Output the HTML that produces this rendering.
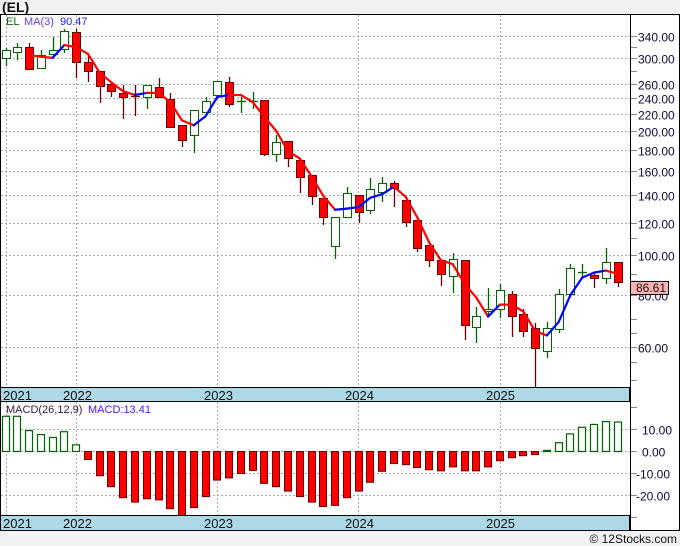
<!DOCTYPE html>
<html><head><meta charset="utf-8"><style>
html,body{margin:0;padding:0;background:#f2f2f2;}
svg{display:block;font-family:"Liberation Sans",Tahoma,sans-serif;}
</style></head><body>
<svg id="s" width="680" height="546" xmlns="http://www.w3.org/2000/svg">
<rect x="0" y="0" width="680" height="546" fill="#f2f2f2"/>
<rect x="0.5" y="14.5" width="679" height="516" fill="#fff" stroke="#000"/>
<g id="grid"></g>
<g id="cand"></g>
<g id="ma"></g>
<g id="macd"></g>
<rect x="0.5" y="387.5" width="629" height="14" fill="#add8e6" stroke="#000"/>
<rect x="0.5" y="515.5" width="629" height="15" fill="#add8e6" stroke="#000"/>
<line x1="630.5" y1="14" x2="630.5" y2="531" stroke="#000"/>
<g font-size="13" fill="#111">
<text x="3" y="400">2021</text><text x="63" y="400">2022</text><text x="204" y="400">2023</text><text x="345" y="400">2024</text><text x="486" y="400">2025</text>
<text x="3" y="528">2021</text><text x="63" y="528">2022</text><text x="204" y="528">2023</text><text x="345" y="528">2024</text><text x="486" y="528">2025</text>
</g>
<text x="2" y="12" font-size="14" font-weight="bold" fill="#111">(EL)</text>
<g font-size="11"><text x="6" y="25" fill="#006400">EL</text><text x="24" y="25" fill="#6a3cf0">MA(3)</text><text x="60" y="25" fill="#2020ff">90.47</text></g>
<g font-size="11"><text x="6" y="413" fill="#3a1a3a">MACD(26,12,9)</text><text x="88" y="413" fill="#4a1aff">MACD:13.41</text></g>
<text x="677" y="543" font-size="12" fill="#111" text-anchor="end">© 12Stocks.com</text>
<g id="ax" font-size="12" fill="#0a0a3a"></g>
<rect x="630.5" y="281.5" width="38" height="13" fill="#ffb4b4" stroke="#000"/>
<text x="636" y="292" font-size="12" fill="#111">86.61</text>
</svg>
<script>
var NS="http://www.w3.org/2000/svg";
function el(p,t,a,txt){var e=document.createElementNS(NS,t);for(var k in a)e.setAttribute(k,a[k]);if(txt!==undefined)e.textContent=txt;document.getElementById(p).appendChild(e);return e;}
function Y(p){return 1080.6-179.2*Math.log(p);}
function P(y){return Math.exp((1080.6-y)/179.2);}
// grid
[340,300,260,240,220,200,180,160,140,120,100,80,60].forEach(function(p){var y=Math.round(Y(p))+0.5;
el("grid","line",{x1:1,x2:630,y1:y,y2:y,stroke:"#aaa","stroke-dasharray":"2,2"});
el("grid","line",{x1:630,x2:637,y1:y,y2:y,stroke:"#888"});
el("ax","text",{x:638,y:y+5},p.toFixed(2));});
[320,280,110,90,70,65,55,50].forEach(function(p){var y=Math.round(Y(p))+0.5;el("grid","line",{x1:630,x2:637,y1:y,y2:y,stroke:"#888"});});
[6,76,217,358,500].forEach(function(x){el("grid","line",{x1:x+0.5,x2:x+0.5,y1:15,y2:387,stroke:"#aaa","stroke-dasharray":"2,2"});el("grid","line",{x1:x+0.5,x2:x+0.5,y1:402,y2:515,stroke:"#aaa","stroke-dasharray":"2,2"});});
var mz=451;
[[10,429],[0,451],[-10,473],[-20,495]].forEach(function(a){var y=a[1]+0.5;el("grid","line",{x1:1,x2:630,y1:y,y2:y,stroke:"#aaa","stroke-dasharray":"2,2"});el("grid","line",{x1:630,x2:637,y1:y,y2:y,stroke:"#888"});el("ax","text",{x:a[0]<0?636:642,y:y+5},a[0].toFixed(2));});
[407,517].forEach(function(y){el("grid","line",{x1:630,x2:637,y1:y+.5,y2:y+.5,stroke:"#888"});});
// candles [open y, close y, high y, low y]
var C=[[58,50,48,66],[52,47,43,60],[47,69,43,69],[68,55,50,68],[54,50,37,58],[49,31,29,53],[32,62,29,78],[62,71,55,82],[71,86,71,103],[84,91,82,97],[93,97,85,119],[96,97,85,116],[97,85,85,109],[87,97,78,97],[99,127,93,127],[125,140,125,147],[135,110,110,153],[112,101,97,112],[95,81,81,95],[82,104,77,107],[102,101,97,113],[102,101,92,109],[100,154,100,156],[154,142,135,162],[141,158,141,167],[160,177,160,193],[175,196,175,205],[198,217,198,225],[246,217,217,259],[217,193,187,217],[195,212,195,223],[210,189,178,214],[192,183,177,202],[183,188,181,207],[200,222,200,227],[220,248,220,252],[245,260,245,267],[260,274,260,286],[276,259,253,293],[260,325,260,340],[327,316,307,343],[311,309,288,317],[309,290,284,318],[294,316,291,337],[314,331,309,337],[328,348,323,387],[351,328,322,358],[329,294,289,333],[294,268,264,294],[273,272,264,277],[275,278,272,288],[278,262,248,284],[262,282,262,287]];
function X(i){return 5.5+11.77*i;}
var closes=[];
C.forEach(function(c,i){var x=Math.round(X(i));var up=c[1]<c[0];var col=up?"#006400":"#6b0000";
var top=Math.min(c[0],c[1]),bot=Math.max(c[0],c[1]);
el("cand","line",{x1:x+0.5,x2:x+0.5,y1:c[2],y2:c[3],stroke:col,"stroke-width":1.3});
if(bot-top<2){el("cand","line",{x1:x-4,x2:x+5,y1:top+0.5,y2:top+0.5,stroke:col,"stroke-width":1.3});}
else el("cand","rect",{x:x-3.5,y:top+0.5,width:8,height:bot-top,fill:up?"#fff":"#ff0000",stroke:col,"stroke-width":1});
closes.push(P(c[1]));});
var prev=null,prevY=null;
for(var i=2;i<closes.length;i++){var m=(closes[i]+closes[i-1]+closes[i-2])/3;var y=Y(m);
if(prev!==null){el("ma","line",{x1:X(i-1),y1:prevY,x2:X(i),y2:y,stroke:m>prev?"#0000ff":"#ff0000","stroke-width":2.2,"stroke-linecap":"round"});}
prev=m;prevY=y;}
// macd
var M=[16,16,9.5,7.7,6.4,9,3,-3.6,-11,-16,-21,-23,-21.5,-22,-26,-29,-25.5,-20.5,-13,-12,-10,-8.6,-14.5,-16,-18,-20.5,-23,-25,-24.5,-21,-18,-14,-9,-5.5,-6,-7.3,-8.3,-8.8,-7,-8.8,-8.8,-7,-4.2,-2.8,-1.9,-1.4,0.5,4,8,11,12.3,13.6,13.4];
M.forEach(function(v,i){var x=Math.round(X(i));var h=v*2.2;var g=v>0;
if(g)el("macd","rect",{x:x-3.5,y:mz-h+0.5,width:7,height:Math.max(h,1),fill:"#fff",stroke:"#006400","stroke-width":1.2});
else el("macd","rect",{x:x-3.5,y:mz+0.5,width:7,height:-h,fill:"#ff0000",stroke:"#6b0000","stroke-width":1});});
</script>
</body></html>
